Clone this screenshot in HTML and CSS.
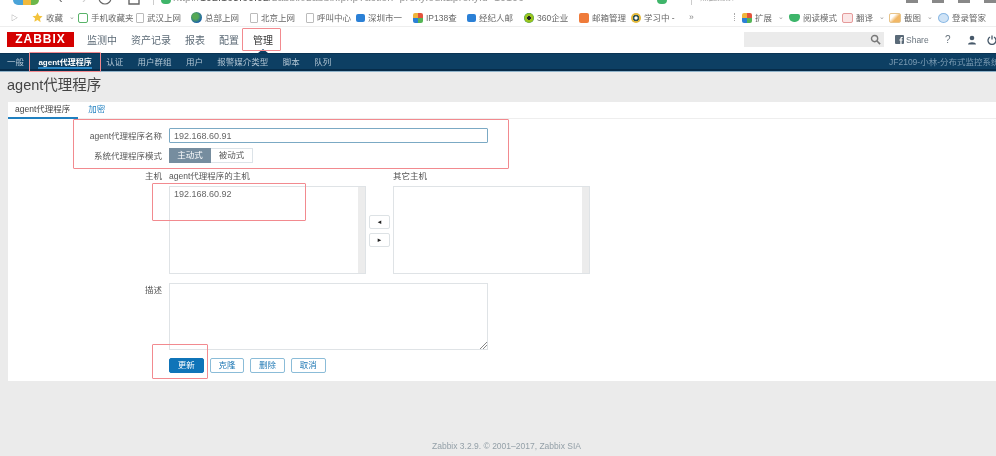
FILE: index.html
```html
<!DOCTYPE html>
<html lang="zh-CN">
<head>
<meta charset="utf-8">
<title>agent代理程序</title>
<link rel="stylesheet" href="styles.css">
</head>
<body>
<div class="page">
  <div class="addr">
    <span class="addr-logo"></span>
    <span class="addr-nav">‹</span><span class="addr-nav dim">›</span>
    <svg class="addr-ic" width="14" height="10" viewBox="0 0 14 10"><circle cx="7" cy="-2" r="6" fill="none" stroke="#666" stroke-width="1.2"/></svg>
    <svg class="addr-ic" width="12" height="10" viewBox="0 0 12 10"><path d="M1 -2v6h10v-6" fill="none" stroke="#666" stroke-width="1.4"/></svg>
    <span class="addr-sep"></span>
    <span class="addr-dot"></span>
    <span class="addr-url">http://<b>192.168.60.92</b>/zabbix/zabbix.php?action=proxy.edit&amp;proxyid=10106</span>
    <span class="addr-spacer"></span>
    <span class="addr-dot addr-dot-r"></span>
    <span class="addr-sep addr-sep-r"></span>
    <span class="addr-search">点此搜索</span>
    <span class="addr-tick"></span><span class="addr-tick"></span><span class="addr-tick"></span><span class="addr-tick"></span>
  </div>
  <div class="bookmarks">
    <span class="bm-arrow">▷</span>
    <span class="bm w46"><svg width="11" height="11" viewBox="0 0 12 12"><path d="M6 .5l1.7 3.6 3.8.5-2.800 2.700.7 3.900L6 8.800l-3.400 1.900.7-3.900L.5 4.600l3.800-.5z" fill="#f3c33c"/></svg>收藏<i class="caret">⌄</i></span>
    <span class="bm w58"><i class="ic ic-green"></i>手机收藏夹</span>
    <span class="bm w55"><i class="ic ic-doc"></i>武汉上网</span>
    <span class="bm w59"><i class="ic ic-globe"></i>总部上网</span>
    <span class="bm w56"><i class="ic ic-doc"></i>北京上网</span>
    <span class="bm w50"><i class="ic ic-doc"></i>呼叫中心</span>
    <span class="bm w57"><i class="ic ic-blue"></i>深圳市一</span>
    <span class="bm w54"><i class="ic ic-multi"></i>IP138查</span>
    <span class="bm w57"><i class="ic ic-blue"></i>经纪人邮</span>
    <span class="bm w55"><i class="ic ic-360"></i>360企业</span>
    <span class="bm w52"><i class="ic ic-orange"></i>邮箱管理</span>
    <span class="bm w58"><i class="ic ic-study"></i>学习中 -</span>
    <span class="bm-more">»</span>
    <span class="bm-spacer"></span>
    <span class="bm-sep"></span>
    <span class="bm w47"><i class="ic ic-multi"></i>扩展<i class="caret">⌄</i></span>
    <span class="bm w53"><i class="ic ic-read"></i>阅读模式</span>
    <span class="bm w47"><i class="ic ic-trans"></i>翻译<i class="caret">⌄</i></span>
    <span class="bm w49"><i class="ic ic-shot"></i>截图<i class="caret">⌄</i></span>
    <span class="bm w58"><i class="ic ic-login"></i>登录管家</span>
  </div>
  <header class="top">
    <span class="logo">ZABBIX</span>
    <nav class="mainnav">
      <a>监测中</a><a>资产记录</a><a>报表</a><a>配置</a><a class="current">管理</a>
    </nav>
    <div class="top-right">
      <div class="search">
        <svg width="11" height="11" viewBox="0 0 12 12"><circle cx="5" cy="5" r="3.400" fill="none" stroke="#777" stroke-width="1.500"/><path d="M7.600 7.600l3.400 3.400" stroke="#777" stroke-width="1.700"/></svg>
      </div>
      <span class="share"><svg width="9" height="9" viewBox="0 0 9 9"><rect width="9" height="9" rx="1" fill="#5a6a78"/><path d="M6.600 9V5.600h1V4.500h-1v-.8c0-.4.2-.6.6-.6h.5V2h-.8C5.800 2 5.300 2.700 5.300 3.600v.9h-1v1.100h1V9z" fill="#fff"/></svg>Share</span>
      <span class="help">?</span>
      <svg width="10" height="10" viewBox="0 0 10 10"><circle cx="5" cy="3" r="2.300" fill="#47596a"/><path d="M1 9.500c0-3 8-3 8 0z" fill="#47596a"/></svg>
      <svg class="power" width="10" height="10" viewBox="0 0 10 10"><path d="M3 2a4 4 0 1 0 4 0M5 .5v4" fill="none" stroke="#47596a" stroke-width="1.300"/></svg>
    </div>
  </header>
  <nav class="subnav">
    <a>一般</a><a class="active">agent代理程序</a><a>认证</a><a>用户群组</a><a>用户</a><a>报警媒介类型</a><a>脚本</a><a>队列</a>
    <span class="server">JF2109-小林-分布式监控系统</span>
  </nav>
  <h1 class="title">agent代理程序</h1>
  <main class="card">
    <div class="tabs"><a class="tab on">agent代理程序</a><a class="tab">加密</a></div>
    <form class="form">
      <div class="row r-name">
        <label>agent代理程序名称</label>
        <input class="name" type="text" value="192.168.60.91">
      </div>
      <div class="row r-mode">
        <label>系统代理程序模式</label>
        <div class="seg"><span class="seg-on">主动式</span><span>被动式</span></div>
      </div>
      <div class="row r-hosts">
        <label>主机</label>
        <div class="hosts">
          <div class="col">
            <div class="cap">agent代理程序的主机</div>
            <div class="list"><div class="list-body">192.168.60.92</div><div class="bar"></div></div>
          </div>
          <div class="arrows"><button type="button">◄</button><button type="button">►</button></div>
          <div class="col">
            <div class="cap">其它主机</div>
            <div class="list"><div class="list-body"></div><div class="bar"></div></div>
          </div>
        </div>
      </div>
      <div class="row r-desc">
        <label>描述</label>
        <div class="desc"><svg class="grip" width="7" height="7" viewBox="0 0 7 7"><path d="M7 0L0 7M7 3L3 7" stroke="#888" stroke-width="1"/></svg></div>
      </div>
      <div class="row r-btn">
        <label></label>
        <div class="btns"><button type="button" class="primary">更新</button><button type="button">克隆</button><button type="button">删除</button><button type="button">取消</button></div>
      </div>
    </form>
  </main>
  <footer class="foot">Zabbix 3.2.9. © 2001–2017, Zabbix SIA</footer>

  <span class="notch"></span>
  <span class="mark m-admin"></span>
  <span class="mark m-sub"></span>
  <span class="mark m-form"></span>
  <span class="mark m-host"></span>
  <span class="mark m-btn"></span>
</div>
</body>
</html>
```
FILE: styles.css
```css
* { box-sizing: border-box; }
html, body { margin: 0; padding: 0; }
body {
  width: 996px;
  height: 456px;
  overflow: hidden;
  background: #ebebeb;
  font-family: "Liberation Sans", "Noto Sans CJK SC", sans-serif;
  font-size: 8.5px;
  color: #444;
}
.page {
  position: relative;
  width: 996px;
  height: 456px;
  overflow: hidden;
  filter: blur(0.7px);
}
.addr {
  height: 10px;
  background: #fff;
  display: flex;
  align-items: flex-start;
  overflow: hidden;
  padding-left: 13px;
  color: #777;
}
.addr-logo { width: 26px; height: 5px; margin-right: 19px; flex: none; border-radius: 0 0 13px 13px; background: linear-gradient(90deg, #4aa3d8 0 40%, #f1b93c 40% 70%, #6cb74a 70%); }
.addr-nav { font-size: 14px; line-height: 8px; height: 8px; width: 24px; color: #666; margin-top: -6px; }
.addr-nav.dim { color: #ccc; width: 16px; }
.addr-ic { margin-right: 16px; flex: none; }
.addr-sep { width: 1px; height: 5px; background: #ccc; margin: 0 7px 0 -3px; flex: none; }
.addr-dot { width: 10px; height: 4px; border-radius: 0 0 5px 5px; background: #3fb56a; margin-right: 2px; flex: none; }
.addr-url { white-space: nowrap; font-size: 10.800px; line-height: 12px; height: 12px; margin-top: -9px; color: #999; }
.addr-url b { color: #555; font-weight: 400; }
.addr-spacer { flex: 1; }
.addr-dot-r { margin-right: 24px; }
.addr-sep-r { margin: 0 8px 0 0; }
.addr-search { color: #aaa; font-size: 8.500px; line-height: 10px; height: 10px; margin: -8px 172px 0 0; white-space: nowrap; }
.addr-tick { width: 12px; height: 3px; background: #888; margin-right: 14px; flex: none; }
.addr-tick:last-child { margin-right: 0; }
.bookmarks {
  height: 17px;
  background: #fff;
  border-bottom: 1px solid #eee;
  display: flex;
  align-items: center;
  padding: 0 0 3px 11px;
  white-space: nowrap;
  color: #666;
  font-size: 8.500px;
}
.bm-arrow { width: 21px; color: #888; font-size: 7px; flex: none; }
.bm { display: flex; align-items: center; gap: 3px; flex: none; }
.bm > svg, .bm > .ic { margin-top: 2px; }
.w46 { width: 46px; } .w47 { width: 47px; } .w49 { width: 49px; } .w50 { width: 50px; }
.w52 { width: 52px; } .w53 { width: 53px; } .w54 { width: 54px; } .w55 { width: 55px; }
.w56 { width: 56px; } .w57 { width: 57px; } .w58 { width: 58px; } .w59 { width: 59px; }
.bm-more { color: #888; flex: none; }
.bm-spacer { flex: 1; }
.bm-sep { width: 1px; height: 8px; margin-right: 7px; border-left: 1px dotted #aaa; flex: none; }
.caret { font-style: normal; color: #999; font-size: 7px; margin-left: 3px; line-height: 6px; }
.ic { display: inline-block; width: 10px; height: 10px; flex: none; border-radius: 2px; }
.ic-green { border: 1.500px solid #58b368; background: #fff; }
.ic-doc { border: 1px solid #bbb; background: #fff; width: 8px; border-radius: 1px; }
.ic-globe { background: radial-gradient(circle at 40% 40%, #55a855 30%, #1d63a8 70%); border-radius: 50%; width: 11px; height: 11px; }
.ic-blue { background: #2b80d6; width: 9px; height: 8px; }
.ic-multi { background: conic-gradient(#e4533c 25%, #55b555 0 50%, #2b80d6 0 75%, #f0b53c 0); }
.ic-360 { background: radial-gradient(circle, #222 25%, #9ac420 30% 60%, #1f8a3a 70%); border-radius: 50%; }
.ic-orange { background: #ef7b3a; }
.ic-study { background: radial-gradient(circle, #fff 20%, #355 25% 45%, #e3b93c 50%); border-radius: 50%; }
.ic-read { background: #3db56a; border-radius: 2px 2px 5px 5px; width: 11px; height: 8px; }
.ic-trans { background: #fbe6e6; border: 1px solid #e59a9a; width: 11px; }
.ic-shot { background: linear-gradient(135deg, #fff 30%, #f2b866 60%); border: 1px solid #e8c48a; width: 12px; }
.ic-login { background: #cfe3f6; border: 1.500px solid #8ab8e4; border-radius: 50%; width: 11px; }

.top {
  height: 26px;
  background: #fff;
  display: flex;
  align-items: center;
  padding: 0 0 1px 7px;
}
.logo {
  background: #d40000;
  color: #fff;
  font-weight: 700;
  font-size: 12px;
  letter-spacing: 1px;
  width: 67px;
  height: 15px;
  line-height: 15px;
  text-align: center;
  flex: none;
}
.mainnav { display: flex; margin-left: 13px; gap: 14px; font-size: 10px; color: #5c6a76; }
.mainnav .current { color: #333; }
.top-right { margin-left: auto; display: flex; align-items: center; height: 100%; color: #68737d; }
.search { width: 140px; height: 15px; background: #ebebeb; margin-right: 11px; display: flex; align-items: center; justify-content: flex-end; padding-right: 3px; }
.share { display: flex; align-items: center; gap: 2px; font-size: 8.500px; width: 50px; }
.help { font-size: 10px; width: 22px; }
.power { margin-left: 10px; margin-right: -1px; }

.subnav {
  height: 18px;
  background: #0d3f63;
  border-top: 1px solid #0a3454;
  border-bottom: 2px solid #062c4a;
  display: flex;
  align-items: center;
  padding-left: 7px;
  gap: 14.400px;
  color: #b3c6d4;
  font-size: 8.500px;
  box-shadow: 0 1px 0 #8fb2c9;
}
.subnav a { line-height: 17px; height: 15px; white-space: nowrap; }
.subnav .active { color: #fff; font-weight: 700; font-size: 8px; box-shadow: inset 0 -2px 0 #2a86c4; }
.server { margin-left: auto; width: 107px; overflow: hidden; color: #7a9ab2; white-space: nowrap; flex: none; line-height: 15px; padding-top: 1px; }

.title {
  margin: 2px 0 0;
  padding: 3px 0 0 7px;
  height: 29px;
  font-size: 14.500px;
  line-height: 16px;
  font-weight: 400;
  color: #444;
  border-top: 1px solid transparent;
}
.card {
  margin-left: 8px;
  height: 279px;
  background: #fff;
}
.tabs {
  height: 17px;
  display: flex;
  border-bottom: 1px solid #eee;
  line-height: 15px;
}
.tab { color: #2a86c4; padding: 0 8px; height: 17px; white-space: nowrap; }
.tab.on { color: #444; border-bottom: 2px solid #1f80c0; padding: 0 8px 0 7px; margin-right: 2px; }
.form { padding-top: 9px; }
.row { display: flex; }
.row label {
  width: 161px;
  padding-right: 7px;
  text-align: right;
  flex: none;
  color: #555;
  line-height: 14px;
  white-space: nowrap;
}
.r-name { align-items: center; height: 15px; }
.name {
  width: 319px;
  height: 15px;
  padding: 0 2px 0 4px;
  border: 1px solid #7ba9c4;
  border-radius: 1px;
  font: 9px "Liberation Sans", sans-serif;
  color: #666;
  background: #fff;
}
.r-mode { margin-top: 5px; height: 15px; align-items: center; }
.seg { display: flex; height: 15px; border: 1px solid #dce3e8; line-height: 13px; }
.seg span { width: 41px; text-align: center; color: #555; }
.seg .seg-on { background: #768d9f; color: #fff; width: 42px; margin: -1px 0 -1px -1px; line-height: 15px; }
.r-hosts { margin-top: 6px; }
.hosts { display: flex; }
.col { display: flex; flex-direction: column; }
.cap { height: 17px; line-height: 14px; color: #555; white-space: nowrap; }
.list {
  width: 197px;
  height: 88px;
  border: 1px solid #dfe3e6;
  display: flex;
  background: #fff;
}
.list-body { flex: 1; padding: 2px 4px; font-size: 9px; line-height: 10px; color: #666; }
.bar { width: 7px; background: #ececec; }
.arrows { width: 27px; padding: 46px 0 0 3px; display: flex; flex-direction: column; gap: 4px; }
.arrows button {
  width: 21px;
  height: 14px;
  padding: 0;
  border: 1px solid #dde2e5;
  border-radius: 2px;
  background: #fff;
  color: #222;
  font-size: 6px;
  line-height: 10px;
}
.r-desc { margin-top: 9px; }
.desc { position: relative; width: 319px; height: 67px; border: 1px solid #dfe3e6; background: #fff; }
.grip { position: absolute; right: 0; bottom: 0; }
.r-btn { margin-top: 8px; }
.btns { display: flex; gap: 6.200px; }
.btns button {
  width: 34.500px;
  height: 15px;
  padding: 0;
  border: 1px solid #8bbcd8;
  border-radius: 2px;
  background: #fff;
  color: #1f78b4;
  font: 8.500px/13px "Liberation Sans", "Noto Sans CJK SC", sans-serif;
}
.btns .primary { background: #0f74b8; border-color: #0f74b8; color: #fff; }
.foot {
  padding-top: 60px;
  padding-left: 432px;
  line-height: 10px;
  color: #94a0a8;
  white-space: nowrap;
}
.notch { position: absolute; left: 258px; top: 49px; width: 0; height: 0; border: 4px solid transparent; border-top: 0; border-bottom-color: #0d3f63; border-left-width: 5px; border-right-width: 5px; }
.mark { position: absolute; border: 1px solid #f28a8f; border-radius: 1px; }
.m-admin { left: 242px; top: 28px; width: 39px; height: 23px; }
.m-sub { left: 29px; top: 52px; width: 72px; height: 20px; }
.m-form { left: 73px; top: 119px; width: 436px; height: 50px; }
.m-host { left: 152px; top: 183px; width: 154px; height: 38px; }
.m-btn { left: 152px; top: 344px; width: 56px; height: 35px; }
```
